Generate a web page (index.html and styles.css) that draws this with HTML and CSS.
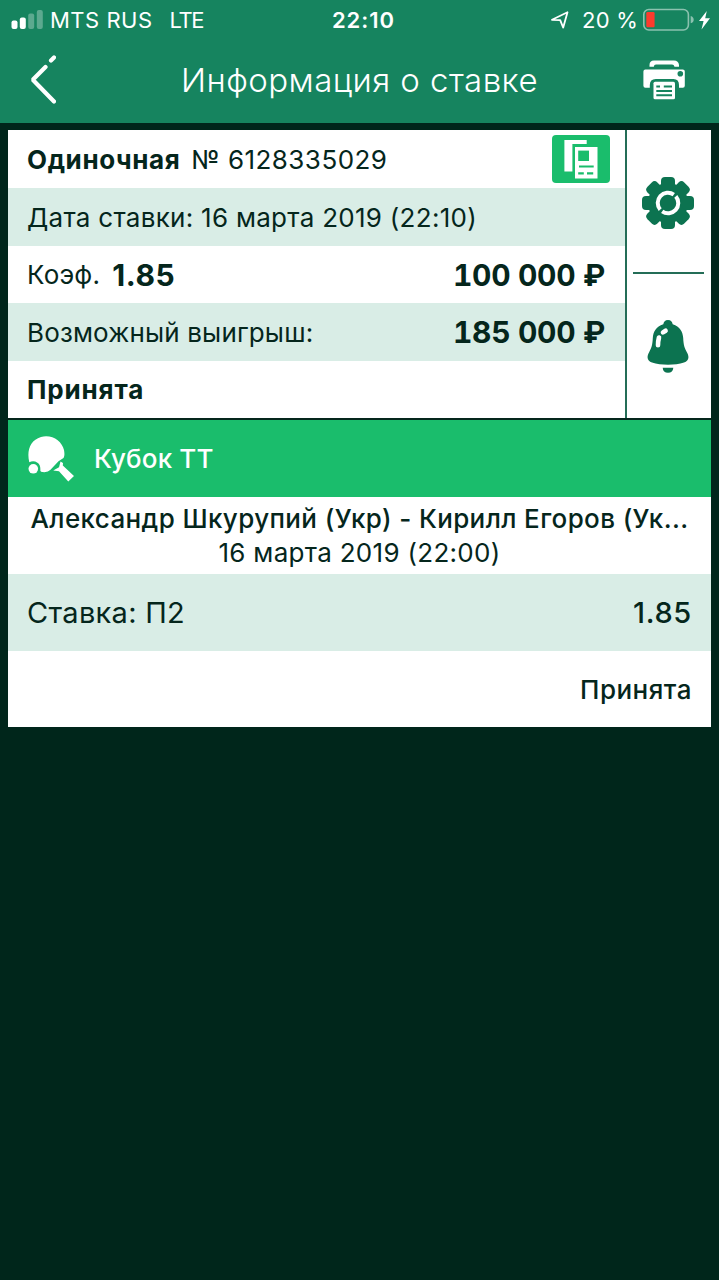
FILE: index.html
```html
<!DOCTYPE html>
<html lang="ru">
<head>
<meta charset="utf-8">
<title>Информация о ставке</title>
<link rel="stylesheet" href="styles.css">
</head>
<body>
<header class="header">
  <div class="status">
    <div class="status-left">
      <svg class="signal" width="33" height="20" viewBox="0 0 33 20" fill="#fff">
        <rect x="0.5" y="10.5" width="6" height="8.5" rx="2"/>
        <rect x="8.8" y="7.5" width="6" height="11.5" rx="2"/>
        <rect x="17.2" y="3.5" width="6" height="15.5" rx="2" opacity=".3"/>
        <rect x="25.8" y="0" width="6" height="19" rx="2" opacity=".3"/>
      </svg>
      <span class="carrier">MTS RUS</span>
      <span class="network">LTE</span>
    </div>
    <span class="clock">22:10</span>
    <div class="status-right">
      <svg width="20" height="20" viewBox="0 0 20 20" fill="none" stroke="#fff" stroke-width="1.8" stroke-linejoin="round"><path d="M2 9.8L17.5 2.3L13.2 17.6L10.2 10.2Z"/></svg>
      <span class="percent">20 %</span>
      <svg class="battery" width="52" height="24" viewBox="0 0 52 24">
        <rect x="0.8" y="1.5" width="44.6" height="20.5" rx="5" fill="none" stroke="#fff" stroke-opacity=".5" stroke-width="1.6"/>
        <rect x="3.3" y="4" width="8.3" height="15.3" rx="1.2" fill="#fc3b2d"/>
        <path d="M47.7 8Q50.7 9 50.7 11.8Q50.7 14.5 47.7 15.3Z" fill="#fff" opacity=".5"/>
      </svg>
      <svg class="bolt" width="11" height="19" viewBox="0 0 11 19" fill="#fff"><path d="M7.8 0L0 10H4.6L2.5 18.5L11 7.3H6.2Z"/></svg>
    </div>
  </div>
  <div class="nav">
    <svg class="back" width="28" height="52" viewBox="0 0 28 52" fill="none" stroke="#fff" stroke-width="4.2" stroke-linecap="round" stroke-linejoin="bevel"><path d="M26 3.5L23 6.5M17.5 13L4.8 25.8L26 47.5"/></svg>
    <h1 class="title">Информация о ставке</h1>
    <svg class="printer" width="42" height="40" viewBox="0 0 42 40">
      <path d="M6.5 6.8V5Q6.5 .5 11 .5H31Q35.5 .5 36 5V6.8H31.5Q31 4.6 29 4.6H13Q11 4.6 10.8 6.8Z" fill="#fff"/>
      <path d="M2.4 9.5H39.8Q41.8 9.5 41.8 11.5V25.8Q41.8 27.8 39.8 27.8H36V25Q36 19 30.5 19H12.8Q6.8 19 6.8 25V27.8H2.4Q.4 27.8 .4 25.8V11.5Q.4 9.5 2.4 9.5Z" fill="#fff"/>
      <circle cx="37.3" cy="13.7" r="2.8" fill="#16845f"/>
      <rect x="10.5" y="21.7" width="21.5" height="17.6" rx="1.6" fill="#fff"/>
      <path d="M13.3 26.6H17M20.8 26.6H29M13.3 31H29M13.3 35.2H29" stroke="#16845f" stroke-width="2"/>
    </svg>
  </div>
</header>
<main class="ticket">
  <section class="summary">
    <div class="details">
      <div class="row">
        <span class="kind">Одиночная</span><span class="number">№ 6128335029</span>
        <div class="copy">
          <svg width="58" height="48" viewBox="0 0 58 48"><path d="M12.4 5H34.7V9H20.4V36.4H12.4Z" fill="#fff"/><rect x="23" y="12" width="22.5" height="31.5" fill="#fff"/><path d="M26.2 15.6H37V26H26.2Z" fill="#1abd6c"/><path d="M27 31.5H41.7M26.2 38.4H31.8M35 38.4H41.2" stroke="#1abd6c" stroke-width="2.2"/></svg>
        </div>
      </div>
      <div class="row tinted"><span class="date">Дата ставки: 16 марта 2019 (22:10)</span></div>
      <div class="row"><span class="label">Коэф.</span><span class="odds">1.85</span><span class="amount">100 000 ₽</span></div>
      <div class="row tinted"><span class="win">Возможный выигрыш:</span><span class="amount">185 000 ₽</span></div>
      <div class="row"><span class="state">Принята</span></div>
    </div>
    <div class="tools">
      <div class="tool gear">
        <svg width="52" height="52" viewBox="-26 -26 52 52" fill="#0c7350">
          <circle r="20"/>
          <g id="teeth"><rect x="-7" y="-26" width="14" height="52" rx="4"/><rect x="-26" y="-7" width="52" height="14" rx="4"/></g>
          <use href="#teeth" transform="rotate(45)"/>
          <g fill="none" stroke="#fff" stroke-width="4"><path d="M-7.8 6.6A10.2 10.2 0 0 1 5.8 -8.4"/><path d="M7.8 -6.6A10.2 10.2 0 0 1 -5.8 8.4"/></g>
        </svg>
      </div>
      <div class="tool bell">
        <svg width="42" height="53" viewBox="0 0 42 53" fill="#0c7350">
          <path d="M21 0C24 0 25.2 1.8 25.7 4.3C33 6.6 35.8 12 36.2 18C36.5 25 37.5 28 40 32.5C43 38 41 41 37 42.5C28 45.4 14 45.4 5 42.5C1 41 -1 38 2 32.5C4.5 28 5.5 25 5.8 18C6.2 12 9 6.6 16.3 4.3C16.8 1.8 18 0 21 0Z"/>
          <path d="M15.7 47.8H26.3Q26 52.8 21 52.8Q16 52.8 15.7 47.8Z"/>
          <g stroke="#fff" stroke-linecap="round" fill="none" stroke-width="4.6"><path d="M16 12.4L18.6 10.7M12 17.5Q11 21 11 25.2"/></g>
        </svg>
      </div>
    </div>
  </section>
  <section class="league">
    <svg class="paddle" width="46" height="46" viewBox="0 0 46 46" fill="#fff">
      <path d="M1.3 26.3C-1.5 15 2 4 13 .9C24 -2 34 5 36 14C36.8 18.5 36.4 20.5 35.5 22L30.5 25.2L22.5 33.8Q19.5 37 13 35.8Q12.5 35 12.3 34.5Q12.8 29 9.5 26.8Q5.5 24.2 1.3 26.3Z"/>
      <circle cx="5.3" cy="32.8" r="4.8"/>
      <path d="M25.2 34.5L31 31.2L32.5 25.5L35 27L34.8 29.5L46 40L40.3 45.5L31 35.2Z"/>
    </svg>
    <span class="league-name">Кубок ТТ</span>
  </section>
  <section class="match">
    <div class="teams">Александр Шкурупий (Укр) - Кирилл Егоров (Ук...</div>
    <div class="match-time">16 марта 2019 (22:00)</div>
  </section>
  <section class="pick"><span class="pick-name">Ставка: П2</span><span class="pick-odds">1.85</span></section>
  <section class="result"><span>Принята</span></section>
</main>
</body>
</html>
```

FILE: styles.css
```css
* { box-sizing: border-box; }
body { margin: 0; min-height: 1280px; background: #00261b; color: #05261c; font: 26px/1 Inter, "Noto Sans", sans-serif; }
svg { display: block; flex: none; }
span, h1 { white-space: pre; }
.header { height: 123px; background: #16845f; color: #fff; }
.status { height: 40px; display: grid; grid-template-columns: 1fr auto 1fr; align-items: center; padding: 0 9px 0 11px; font-size: 22px; }
.status-left, .status-right { display: flex; align-items: center; }
.status-right { justify-content: flex-end; }
.carrier { margin-left: 6px; letter-spacing: .5px; }
.network { margin-left: 17px; letter-spacing: -1.4px; }
.clock { margin-left: 6px; font-weight: 600; letter-spacing: 1px; }
.percent { margin: 0 5px 0 12px; letter-spacing: .2px; }
.bolt { margin-left: 4px; }
.nav { height: 83px; display: grid; grid-template-columns: 44px 1fr 44px; align-items: center; padding: 0 34px 0 28px; }
.back { margin-top: -3px; }
.title { margin: -3px 0 0; padding-left: 6px; text-align: center; font-size: 33px; line-height: 40px; font-weight: 350; letter-spacing: .45px; }
.printer { margin-top: -3px; justify-self: end; }
.ticket { margin: 7px 8px 0; width: 703px; background: #fff; }
.summary { height: 290px; display: flex; border-bottom: 2px solid #05261c; }
.details { width: 617px; display: grid; grid-template-rows: 58px 58px 57px 58px 57px; }
.row { display: flex; align-items: center; padding: 0 20px 0 19px; }
.tinted, .pick { background: #d9ede6; }
.kind, .state { font-weight: 700; letter-spacing: .6px; }
.kind, .number { padding-top: 1px; }
.state { padding-top: 1px; letter-spacing: .85px; }
.number { margin-left: 11px; letter-spacing: .45px; }
.date { padding-top: 1px; letter-spacing: .28px; }
.win { padding-top: 1px; letter-spacing: .15px; }
.label { letter-spacing: .2px; }
.copy { margin: 0 -5px 0 auto; background: #1abd6c; border-radius: 4px; }
.odds { margin-left: 12px; letter-spacing: .6px; }
.odds, .amount { font-size: 30px; font-weight: 700; }
.amount { margin-left: auto; font-variant-numeric: tabular-nums; letter-spacing: -.3px; }
.tools { flex: 1; border-left: 2px solid #246d57; display: grid; grid-template-rows: 144px 144px; padding: 0 7px 0 6px; }
.tool { display: flex; align-items: center; justify-content: center; padding-right: 2px; }
.gear { padding-top: 3px; border-bottom: 2px solid #246d57; }
.league { height: 77px; background: #1abd6c; color: #fff; display: flex; align-items: center; padding-left: 20px; }
.league-name { margin-left: 20px; font-weight: 500; letter-spacing: .15px; }
.match { height: 77px; padding-top: 5px; text-align: center; line-height: 34px; }
.teams { font-weight: 500; white-space: nowrap; letter-spacing: .38px; }
.match-time { letter-spacing: .3px; }
.pick, .result { height: 77px; display: flex; align-items: center; justify-content: space-between; padding: 0 19px; font-size: 29px; }
.pick-name { letter-spacing: .3px; }
.pick-odds { font-weight: 500; letter-spacing: .7px; }
.result { height: 76px; padding-top: 1px; justify-content: flex-end; font-size: 26px; font-weight: 500; letter-spacing: .5px; }
```
